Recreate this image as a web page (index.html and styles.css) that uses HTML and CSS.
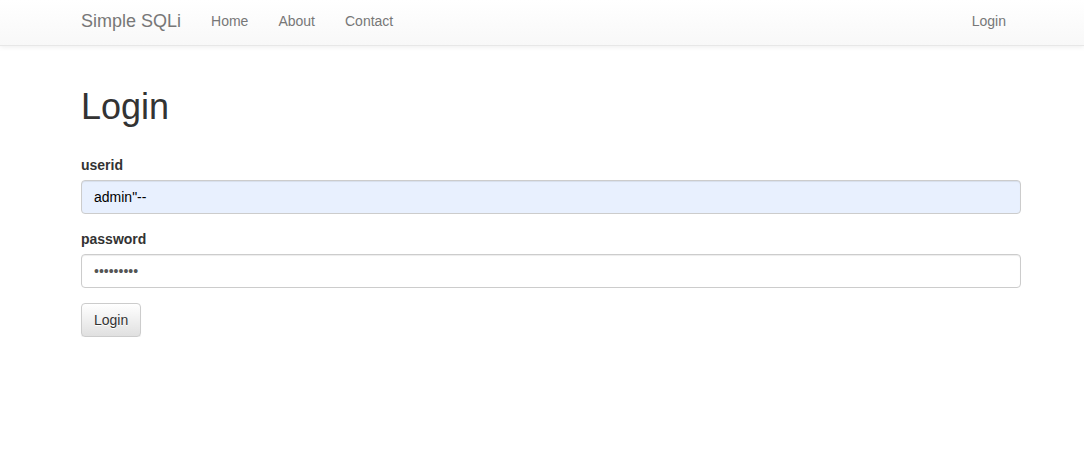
FILE: index.html
```html
<!DOCTYPE html>
<html lang="en">
<head>
<meta charset="utf-8">
<title>Simple SQLi</title>
<link rel="stylesheet" href="styles.css">
</head>
<body>
<nav class="navbar">
  <div class="container nav-inner">
    <a class="brand" href="#">Simple SQLi</a>
    <ul class="nav">
      <li><a href="#">Home</a></li>
      <li><a href="#">About</a></li>
      <li><a href="#">Contact</a></li>
    </ul>
    <ul class="nav nav-right">
      <li><a href="#">Login</a></li>
    </ul>
  </div>
</nav>
<main class="container page">
  <h1>Login</h1>
  <form class="form">
    <div class="form-group">
      <label for="userid">userid</label>
      <input id="userid" class="form-control autofilled" type="text" value="admin&quot;--">
    </div>
    <div class="form-group">
      <label for="password">password</label>
      <input id="password" class="form-control" type="password" value="adminpass">
    </div>
    <button type="button" class="btn">Login</button>
  </form>
</main>
</body>
</html>
```
FILE: styles.css
```css
* { box-sizing: border-box; }
html, body { margin: 0; padding: 0; }
body {
  font-family: "Liberation Sans", Arial, Helvetica, sans-serif;
  font-size: 14px;
  line-height: 20px;
  color: #333;
  background: #fff;
}
.container {
  width: 940px;
  margin-left: 81px;
}
.navbar {
  height: 46px;
  background: linear-gradient(to bottom, #fff 0, #f8f8f8 100%);
  border-bottom: 1px solid #e7e7e7;
  box-shadow: inset 0 1px 0 rgba(255,255,255,.15), 0 1px 5px rgba(0,0,0,.075);
}
.nav-inner {
  display: flex;
  align-items: flex-start;
}
.brand {
  font-size: 18px;
  line-height: 20px;
  padding: 11px 15px 0 0;
  color: #777;
  text-decoration: none;
}
.nav {
  display: flex;
  list-style: none;
  margin: 0;
  padding: 0;
}
.nav a {
  display: block;
  padding: 11px 15px 0;
  line-height: 20px;
  color: #777;
  text-decoration: none;
}
.nav-right {
  margin-left: auto;
}
.page {
  padding-top: 21px;
}
h1 {
  font-size: 36px;
  font-weight: 500;
  line-height: 1.1;
  margin: 20px 0 28px;
  color: #333;
}
.form-group {
  margin-bottom: 15px;
}
label {
  display: block;
  font-weight: 700;
  margin-bottom: 5px;
}
.form-control {
  display: block;
  width: 100%;
  height: 34px;
  padding: 6px 12px;
  font-family: inherit;
  font-size: 14px;
  line-height: 20px;
  color: #555;
  background: #fff;
  border: 1px solid #ccc;
  border-radius: 4px;
  box-shadow: inset 0 1px 1px rgba(0,0,0,.075);
  outline: none;
}
.autofilled {
  background: #e8f0fe;
  color: #000;
}
.btn {
  display: inline-block;
  height: 34px;
  padding: 6px 12px;
  font-family: inherit;
  font-size: 14px;
  line-height: 20px;
  color: #333;
  background: linear-gradient(to bottom, #fff 0, #e0e0e0 100%);
  border: 1px solid #ccc;
  border-radius: 4px;
  box-shadow: inset 0 1px 0 rgba(255,255,255,.15), 0 1px 1px rgba(0,0,0,.075);
  text-shadow: 0 1px 0 #fff;
  cursor: pointer;
}
```
